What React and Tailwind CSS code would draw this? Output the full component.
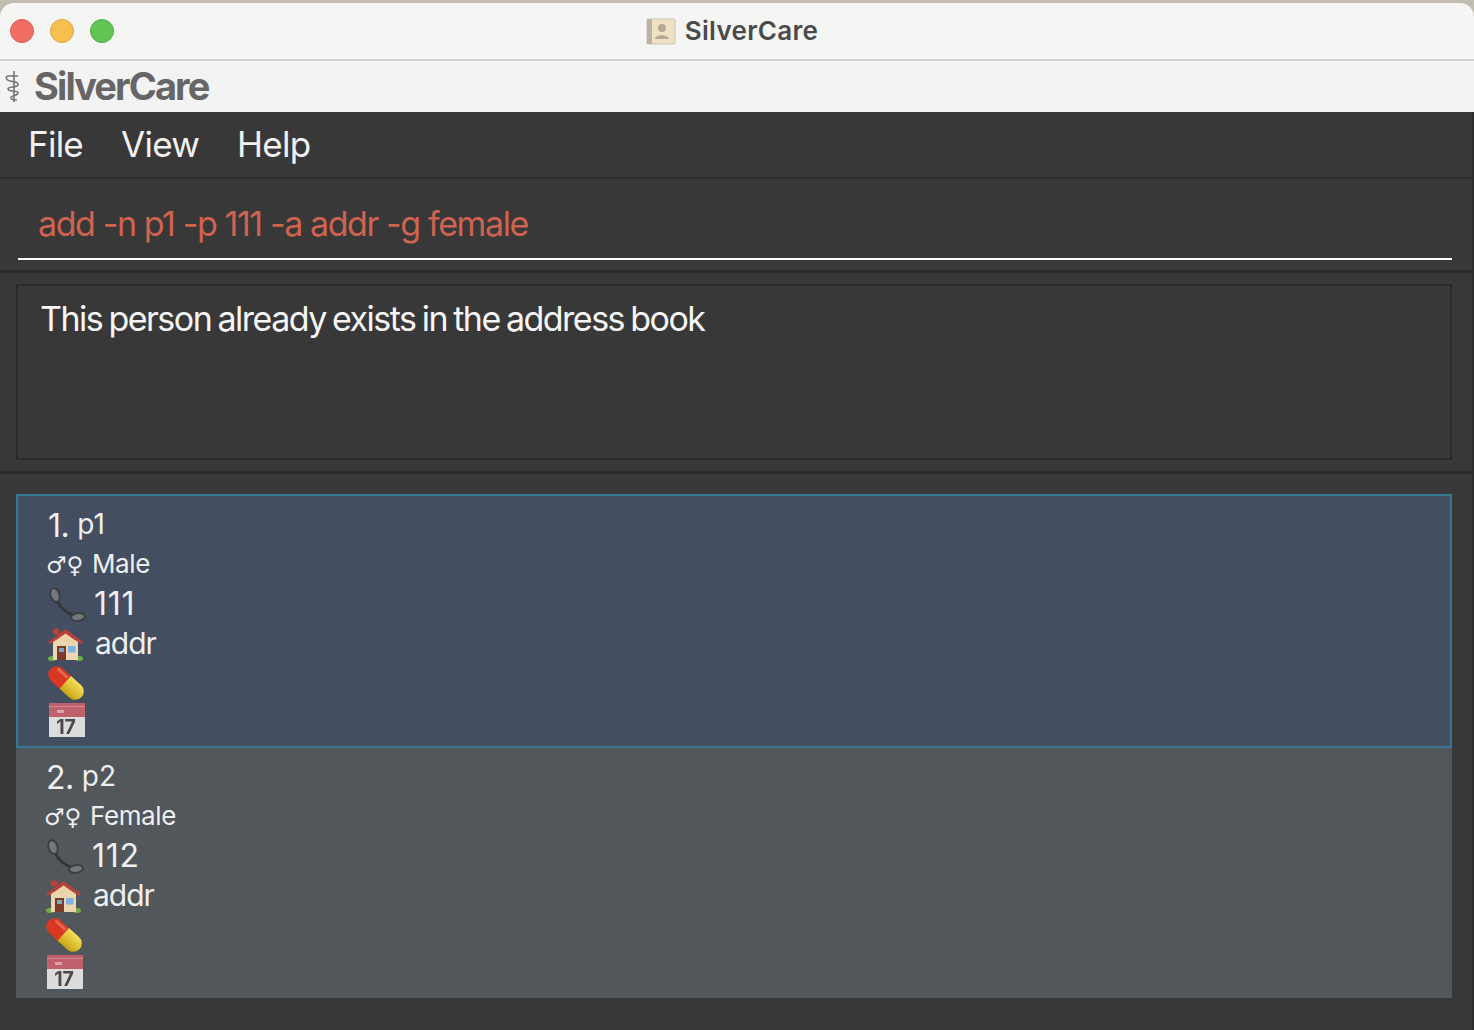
const sans = { fontFamily: 'Inter, "Liberation Sans", sans-serif' };

function Phone() {
  return (
    <svg width="38" height="36" viewBox="0 0 38 36" className="blur-[0.7px]">
      <path d="M8 13 C12 22 18 27 27 30" fill="none" stroke="#33363a" strokeWidth="3" />
      <ellipse cx="7" cy="9" rx="4.5" ry="7" transform="rotate(-18 7 9)" fill="#74777b" stroke="#3c3f43" strokeWidth="2" />
      <ellipse cx="30" cy="31" rx="7" ry="3.8" transform="rotate(-8 30 31)" fill="#74777b" stroke="#3c3f43" strokeWidth="2" />
    </svg>
  );
}

function House() {
  return (
    <svg width="36" height="34" viewBox="0 0 36 34" className="blur-[0.6px]">
      <ellipse cx="4" cy="31.5" rx="4" ry="2.5" fill="#6fae48" />
      <ellipse cx="31" cy="31.5" rx="4" ry="2.5" fill="#6fae48" />
      <rect x="5" y="13" width="25" height="20" fill="#ecd6b2" />
      <path d="M17.5 6 L30 15 H5 Z" fill="#ecd3a8" />
      <path d="M17.5 2 L35 15 L33 17 L17.5 6.5 L2 17 L0 15 Z" fill="#b8403a" />
      <circle cx="8" cy="4.5" r="3.2" fill="#b8403a" />
      <rect x="9" y="19" width="9" height="14" fill="#7c3a2a" />
      <rect x="11" y="21" width="5" height="4" fill="#7ba6c9" />
      <rect x="20" y="19" width="7.5" height="6.5" fill="#7cb4df" />
    </svg>
  );
}

function Pill({ id }) {
  return (
    <svg width="36" height="36" viewBox="0 0 36 36" className="blur-[0.6px]">
      <defs>
        <linearGradient id={id} x1="0" y1="0" x2="0" y2="1">
          <stop offset="0" stopColor="#f6e05a" />
          <stop offset="1" stopColor="#c9a414" />
        </linearGradient>
      </defs>
      <g transform="rotate(42 18 18)">
        <path d="M18 9.5 H5.5 A8.5 8.5 0 0 0 5.5 26.5 H18 Z" fill="#d9371f" />
        <path d="M17 9.5 H30.5 A8.5 8.5 0 0 1 30.5 26.5 H17 Z" fill={`url(#${id})`} />
        <rect x="2" y="11.5" width="14" height="3" rx="1.5" fill="#ffffff" opacity="0.25" />
      </g>
    </svg>
  );
}

function Calendar() {
  return (
    <svg width="38" height="36" viewBox="0 0 38 36" className="blur-[0.6px]">
      <rect x="1" y="1" width="36" height="34" fill="#dcdcdc" />
      <rect x="1" y="1" width="36" height="14" fill="#c0606c" />
      <rect x="1" y="4" width="36" height="1" fill="#cf8791" />
      <rect x="9" y="8" width="7" height="3" fill="#d9a4ab" />
      <text x="18" y="32" textAnchor="middle" fontSize="19.5" fontWeight="700" fill="#4a4a4a" style={sans}>17</text>
    </svg>
  );
}

function Staff() {
  return (
    <svg width="18" height="32" viewBox="0 0 18 32" className="blur-[0.3px]">
      <path d="M9 0 V31" stroke="#737373" strokeWidth="1.6" />
      <path d="M13 5 H3 C0 6 1 9 5 10 C9 11 14 11 13 14 C12 17 3 15 3 18 C3 21 13 19 13 22 C13 25 6 24 6 27 C6 29 10 29 12 29" fill="none" stroke="#737373" strokeWidth="1.6" />
    </svg>
  );
}

function AddressIcon() {
  return (
    <svg width="30" height="27" viewBox="0 0 30 27" className="blur-[0.4px]">
      <rect x="1" y="1" width="28" height="25" rx="1" fill="#f0e1c3" stroke="#c9c3b6" />
      <rect x="1" y="1" width="5" height="25" fill="#b9b4aa" />
      <circle cx="16" cy="10" r="4" fill="#b5aa96" />
      <path d="M9 21 C9 16 23 16 23 21 Z" fill="#b5aa96" />
    </svg>
  );
}

function Card({ index, name, gender, phone, selected }) {
  return (
    <div
      className={
        selected
          ? 'h-[254px] border-2 border-[#36788f] bg-[#434e60] pl-[30px] pt-[11px] text-[#eeeff1]'
          : 'h-[250px] bg-[#51575a] pl-[30px] pt-[11px] text-[#eeeff1]'
      }
    >
      <div className="flex h-[37px] items-baseline">
        <span className="text-[32px] leading-[37px] tracking-[-0.5px]">{index}.</span>
        <span className="relative top-[-3px] ml-[8px] text-[28px] leading-[30px]">{name}</span>
      </div>
      <div className="mt-[2px] flex h-[38px] items-center">
        <span className="-ml-[2px] w-[46px] text-[23px] leading-none" style={{ fontFamily: '"DejaVu Sans", sans-serif' }}>♂♀</span>
        <span className="-mt-[4px] text-[26px] tracking-[-0.4px]">{gender}</span>
      </div>
      <div className="flex h-[40px] items-center">
        <span className="w-[46px]"><Phone /></span>
        <span className="text-[32px] tracking-[0.7px]">{phone}</span>
      </div>
      <div className="flex h-[40px] items-center">
        <span className="w-[47px]"><House /></span>
        <span className="-mt-[2px] text-[30px] tracking-[-1px]">addr</span>
      </div>
      <div className="flex h-[38px] items-center"><Pill id={`pill-${index}`} /></div>
      <div className="flex h-[36px] items-center"><Calendar /></div>
    </div>
  );
}

export default function App() {
  return (
    <div className="flex h-[1030px] w-[1474px] flex-col overflow-hidden bg-[#c2bdb3]" style={sans}>
      <div className="mt-[3px] grid h-[58px] shrink-0 grid-cols-[1fr_auto_1fr] items-center rounded-t-[14px] border-b-2 border-[#d2d2d1] bg-[#f5f5f3]">
        <div className="flex gap-[16px] pl-[10px]">
          <span className="h-[24px] w-[24px] rounded-full border border-[#dd5a52] bg-[#f26d63]" />
          <span className="h-[24px] w-[24px] rounded-full border border-[#dfa33f] bg-[#f7bf4f]" />
          <span className="h-[24px] w-[24px] rounded-full border border-[#4fac46] bg-[#61c554]" />
        </div>
        <div className="flex items-center gap-[9px] pr-[10px] text-[26px] font-semibold tracking-[0.3px] text-[#4a4a4a]">
          <AddressIcon />
          <span className="-mt-[2px]">SilverCare</span>
        </div>
        <div />
      </div>
      <div className="flex h-[51px] shrink-0 items-center bg-[#f3f3f3] pl-[5px]">
        <Staff />
        <span className="ml-[11px] text-[38px] font-bold tracking-[-1.9px] text-[#666666]">SilverCare</span>
      </div>
      <div className="flex min-h-0 flex-1 flex-col border-r-2 border-[#2e2e2e] bg-[#383838]">
        <div className="flex h-[65px] shrink-0 items-center gap-[38px] pl-[28px] text-[35px] tracking-[-0.75px] text-[#f1f1f1]">
          <span>File</span>
          <span>View</span>
          <span>Help</span>
        </div>
        <div className="h-[2px] shrink-0 bg-[#2b2b2b]" />
        <div className="h-[91px] shrink-0 pl-[18px] pr-[20px]">
          <div className="flex h-[81px] items-center border-b-2 border-white pl-[20px] pt-[10px] text-[34px] tracking-[-1.4px] text-[#cf6350] [word-spacing:0px]">
            add -n p1 -p 111 -a addr -g female
          </div>
        </div>
        <div className="h-[3px] shrink-0 bg-[#2b2b2b]" />
        <div className="h-[198px] shrink-0 pl-[16px] pr-[20px] pt-[11px]">
          <div className="h-[176px] border-2 border-[#2b2b2b] pl-[22px] pt-[12px] text-[34px] leading-[42px] tracking-[-1.5px] text-[#f6f6f6] [word-spacing:-1.9px]">
            This person already exists in the address book
          </div>
        </div>
        <div className="h-[3px] shrink-0 bg-[#2b2b2b]" />
        <div className="flex flex-col pl-[16px] pr-[20px] pt-[20px]">
          <Card index="1" name="p1" gender="Male" phone="111" selected />
          <Card index="2" name="p2" gender="Female" phone="112" />
        </div>
      </div>
    </div>
  );
}
